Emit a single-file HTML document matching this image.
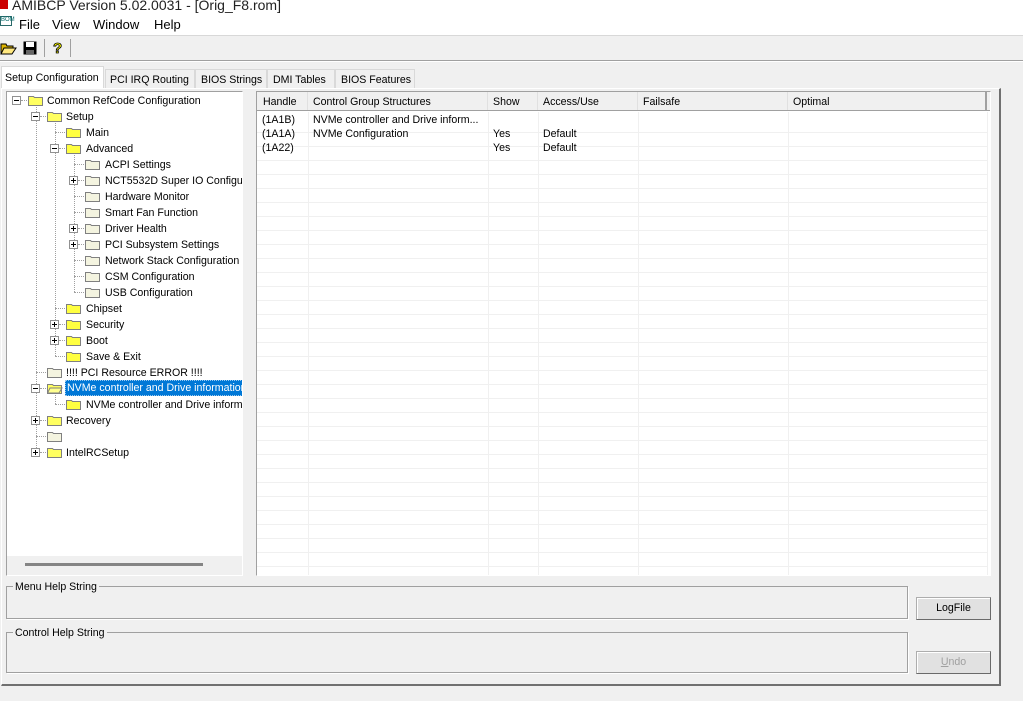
<!DOCTYPE html>
<html><head><meta charset="utf-8"><style>
*{margin:0;padding:0;box-sizing:border-box}
body{width:1023px;height:701px;overflow:hidden;background:#f0f0f0;font-family:"Liberation Sans",Arial,sans-serif;font-size:12px;color:#000;position:relative}
.a{position:absolute;white-space:nowrap}
.t{font-size:10.6px;line-height:16px;margin-top:1px}
.box{position:absolute;width:9px;height:9px;border:1px solid #919191;background:#fff}
.box:before{content:"";position:absolute;left:1px;top:3px;width:5px;height:1px;background:#000}
.box.p:after{content:"";position:absolute;left:3px;top:1px;width:1px;height:5px;background:#000}
.fd{position:absolute;width:16px;height:12px}
.vl{position:absolute;width:0;border-left:1px dotted #a0a0a0}
.hl{position:absolute;height:0;border-top:1px dotted #a0a0a0}
.gr{position:absolute;left:0;width:731px;height:1px;background:#f0f0f0}
.gc{position:absolute;top:0;height:465px;width:1px;background:#f0f0f0}
.th{position:absolute;top:0;height:18px;border-right:1px solid #e0e0e0;padding-left:5px;line-height:20px;font-size:10.6px}
.btn{position:absolute;width:75px;height:23px;background:#e1e1e1;border:1px solid #adadad;border-right-color:#6a6a6a;border-bottom-color:#6a6a6a;box-shadow:inset 1px 1px #fff;text-align:center;line-height:21px;font-size:10.6px}
.grp{position:absolute;left:6px;width:902px;border:1px solid #a0a0a0;box-shadow:1px 1px #fff}
.grp span{position:absolute;top:-7px;left:6px;background:#f0f0f0;padding:0 2px;font-size:10.6px;line-height:14px}
.tab{position:absolute;font-size:10.6px}
</style></head><body>
<div class="a" style="left:0;top:0;width:1023px;height:36px;background:#fff"></div>
<div class="a" style="left:0;top:0;width:8px;height:9px;background:#c00"></div>
<div class="a" style="left:12px;top:-4px;font-size:14px;line-height:18px;color:#222">AMIBCP Version 5.02.0031 - [Orig_F8.rom]</div>
<div class="a" style="left:0;top:16px;width:12px;height:10px;border:1px solid #2a6a6a;font-size:6px;color:#066;line-height:6px">BOM</div>
<div class="a" style="left:19px;top:17px;font-size:13px">File</div>
<div class="a" style="left:52px;top:17px;font-size:13px">View</div>
<div class="a" style="left:93px;top:17px;font-size:13px">Window</div>
<div class="a" style="left:154px;top:17px;font-size:13px">Help</div>
<div class="a" style="left:0;top:35px;width:1023px;height:1px;background:#d8d8d8"></div>
<svg class="a" style="left:0;top:39px" width="75" height="18">
<path d="M1 5h5l1 2h6v3H5L2 15H1z" fill="#ddb400" stroke="#000" stroke-width="1"/><path d="M4 9h12l-4 6H1z" fill="#ffe880" stroke="#000"/>
<rect x="23.5" y="2.5" width="13" height="13" fill="#000"/><rect x="26" y="3" width="8" height="5" fill="#fff"/><rect x="26" y="11" width="8" height="4" fill="#666"/>
<line x1="44.5" y1="0" x2="44.5" y2="18" stroke="#a0a0a0"/>
<text x="53" y="14" font-family="Liberation Sans" font-weight="bold" font-size="15" fill="#ff0" stroke="#000" stroke-width="0.8">?</text>
<line x1="70.5" y1="0" x2="70.5" y2="18" stroke="#a0a0a0"/>
</svg>
<div class="a" style="left:0;top:60px;width:1023px;height:1px;background:#a0a0a0"></div>
<div class="a" style="left:0;top:61px;width:1023px;height:1px;background:#fff"></div>
<!-- tabs -->
<div class="a" style="left:1px;top:66px;width:103px;height:23px;background:#fff;border:1px solid #d9d9d9;border-bottom:none"></div>
<div class="tab a" style="left:5px;top:72px">Setup Configuration</div>
<div class="a" style="left:105px;top:69px;width:90px;height:20px;border:1px solid #d9d9d9;border-bottom:none"></div>
<div class="tab a" style="left:110px;top:74px">PCI IRQ Routing</div>
<div class="a" style="left:195px;top:69px;width:72px;height:20px;border:1px solid #d9d9d9;border-bottom:none"></div>
<div class="tab a" style="left:201px;top:74px">BIOS Strings</div>
<div class="a" style="left:267px;top:69px;width:68px;height:20px;border:1px solid #d9d9d9;border-bottom:none"></div>
<div class="tab a" style="left:273px;top:74px">DMI Tables</div>
<div class="a" style="left:335px;top:69px;width:80px;height:20px;border:1px solid #d9d9d9;border-bottom:none"></div>
<div class="tab a" style="left:341px;top:74px">BIOS Features</div>
<div class="a" style="left:1px;top:88px;width:1000px;height:598px;border:1px solid #fff;border-right:2px solid #707070;border-bottom:2px solid #707070"></div>
<!-- tree -->
<div class="a" style="left:6px;top:91px;width:237px;height:485px;border:1px solid #a0a0a0;border-right-color:#fff;border-bottom-color:#fff;background:#fff;overflow:hidden">
 <div class="a" style="left:0;top:464px;width:240px;height:20px;background:#f0f0f0"></div>
 <div class="a" style="left:18px;top:471px;width:178px;height:3px;background:#858585"></div>
</div>
<div class="a" style="left:7px;top:92px;width:235px;height:462px;overflow:hidden">
<div style="position:absolute;left:-7px;top:-92px;width:260px;height:600px">
<div class="vl" style="left:36px;top:104px;height:348px"></div>
<div class="vl" style="left:55px;top:120px;height:236px"></div>
<div class="vl" style="left:74px;top:152px;height:140px"></div>
<div class="vl" style="left:55px;top:392px;height:12px"></div>
<div class="box" style="left:12px;top:96px"></div><div class="hl" style="left:21px;top:100px;width:8px"></div><svg class="fd" style="left:28px;top:94px"><path d="M.5 2.5h5l1 1h8v8H.5z" fill="#ffff60" stroke="#808080"/></svg><div class="a t" style="left:47px;top:92px">Common RefCode Configuration</div>
<div class="box" style="left:31px;top:112px"></div><div class="hl" style="left:40px;top:116px;width:8px"></div><svg class="fd" style="left:47px;top:110px"><path d="M.5 2.5h5l1 1h8v8H.5z" fill="#ffff60" stroke="#808080"/></svg><div class="a t" style="left:66px;top:108px">Setup</div>
<div class="hl" style="left:55px;top:132px;width:12px"></div><svg class="fd" style="left:66px;top:126px"><path d="M.5 2.5h5l1 1h8v8H.5z" fill="#ffff40" stroke="#808080"/></svg><div class="a t" style="left:86px;top:124px">Main</div>
<div class="box" style="left:50px;top:144px"></div><div class="hl" style="left:59px;top:148px;width:8px"></div><svg class="fd" style="left:66px;top:142px"><path d="M.5 2.5h5l1 1h8v8H.5z" fill="#ffff40" stroke="#808080"/></svg><div class="a t" style="left:86px;top:140px">Advanced</div>
<div class="hl" style="left:74px;top:164px;width:12px"></div><svg class="fd" style="left:85px;top:158px"><path d="M.5 2.5h5l1 1h8v8H.5z" fill="#f4f4e0" stroke="#808080"/></svg><div class="a t" style="left:105px;top:156px">ACPI Settings</div>
<div class="box p" style="left:69px;top:176px"></div><div class="hl" style="left:78px;top:180px;width:8px"></div><svg class="fd" style="left:85px;top:174px"><path d="M.5 2.5h5l1 1h8v8H.5z" fill="#f4f4e0" stroke="#808080"/></svg><div class="a t" style="left:105px;top:172px">NCT5532D Super IO Configuration</div>
<div class="hl" style="left:74px;top:196px;width:12px"></div><svg class="fd" style="left:85px;top:190px"><path d="M.5 2.5h5l1 1h8v8H.5z" fill="#f4f4e0" stroke="#808080"/></svg><div class="a t" style="left:105px;top:188px">Hardware Monitor</div>
<div class="hl" style="left:74px;top:212px;width:12px"></div><svg class="fd" style="left:85px;top:206px"><path d="M.5 2.5h5l1 1h8v8H.5z" fill="#f4f4e0" stroke="#808080"/></svg><div class="a t" style="left:105px;top:204px">Smart Fan Function</div>
<div class="box p" style="left:69px;top:224px"></div><div class="hl" style="left:78px;top:228px;width:8px"></div><svg class="fd" style="left:85px;top:222px"><path d="M.5 2.5h5l1 1h8v8H.5z" fill="#f4f4e0" stroke="#808080"/></svg><div class="a t" style="left:105px;top:220px">Driver Health</div>
<div class="box p" style="left:69px;top:240px"></div><div class="hl" style="left:78px;top:244px;width:8px"></div><svg class="fd" style="left:85px;top:238px"><path d="M.5 2.5h5l1 1h8v8H.5z" fill="#f4f4e0" stroke="#808080"/></svg><div class="a t" style="left:105px;top:236px">PCI Subsystem Settings</div>
<div class="hl" style="left:74px;top:260px;width:12px"></div><svg class="fd" style="left:85px;top:254px"><path d="M.5 2.5h5l1 1h8v8H.5z" fill="#f4f4e0" stroke="#808080"/></svg><div class="a t" style="left:105px;top:252px">Network Stack Configuration</div>
<div class="hl" style="left:74px;top:276px;width:12px"></div><svg class="fd" style="left:85px;top:270px"><path d="M.5 2.5h5l1 1h8v8H.5z" fill="#f4f4e0" stroke="#808080"/></svg><div class="a t" style="left:105px;top:268px">CSM Configuration</div>
<div class="hl" style="left:74px;top:292px;width:12px"></div><svg class="fd" style="left:85px;top:286px"><path d="M.5 2.5h5l1 1h8v8H.5z" fill="#f4f4e0" stroke="#808080"/></svg><div class="a t" style="left:105px;top:284px">USB Configuration</div>
<div class="hl" style="left:55px;top:308px;width:12px"></div><svg class="fd" style="left:66px;top:302px"><path d="M.5 2.5h5l1 1h8v8H.5z" fill="#ffff40" stroke="#808080"/></svg><div class="a t" style="left:86px;top:300px">Chipset</div>
<div class="box p" style="left:50px;top:320px"></div><div class="hl" style="left:59px;top:324px;width:8px"></div><svg class="fd" style="left:66px;top:318px"><path d="M.5 2.5h5l1 1h8v8H.5z" fill="#ffff40" stroke="#808080"/></svg><div class="a t" style="left:86px;top:316px">Security</div>
<div class="box p" style="left:50px;top:336px"></div><div class="hl" style="left:59px;top:340px;width:8px"></div><svg class="fd" style="left:66px;top:334px"><path d="M.5 2.5h5l1 1h8v8H.5z" fill="#ffff40" stroke="#808080"/></svg><div class="a t" style="left:86px;top:332px">Boot</div>
<div class="hl" style="left:55px;top:356px;width:12px"></div><svg class="fd" style="left:66px;top:350px"><path d="M.5 2.5h5l1 1h8v8H.5z" fill="#ffff40" stroke="#808080"/></svg><div class="a t" style="left:86px;top:348px">Save &amp; Exit</div>
<div class="hl" style="left:36px;top:372px;width:12px"></div><svg class="fd" style="left:47px;top:366px"><path d="M.5 2.5h5l1 1h8v8H.5z" fill="#f4f4e0" stroke="#808080"/></svg><div class="a t" style="left:66px;top:364px">!!!! PCI Resource ERROR !!!!</div>
<div class="box" style="left:31px;top:384px"></div><div class="hl" style="left:40px;top:388px;width:8px"></div><svg class="fd" style="left:47px;top:382px"><path d="M.5 2.5h5l1 1h8v8H.5z" fill="#ffff60" stroke="#808080"/><path d="M3 6h12l-3 5H.5z" fill="#ffff90" stroke="#808080"/></svg><div class="a t" style="left:65px;top:379px;width:190px;height:16px;background:#0078d7;color:#fff;padding-left:1px;border:1px dotted #99c9ef;line-height:14px">NVMe controller and Drive information</div>
<div class="hl" style="left:55px;top:404px;width:12px"></div><svg class="fd" style="left:66px;top:398px"><path d="M.5 2.5h5l1 1h8v8H.5z" fill="#ffff40" stroke="#808080"/></svg><div class="a t" style="left:86px;top:396px">NVMe controller and Drive information</div>
<div class="box p" style="left:31px;top:416px"></div><div class="hl" style="left:40px;top:420px;width:8px"></div><svg class="fd" style="left:47px;top:414px"><path d="M.5 2.5h5l1 1h8v8H.5z" fill="#ffff60" stroke="#808080"/></svg><div class="a t" style="left:66px;top:412px">Recovery</div>
<div class="hl" style="left:36px;top:436px;width:12px"></div><svg class="fd" style="left:47px;top:430px"><path d="M.5 2.5h5l1 1h8v8H.5z" fill="#f4f4e0" stroke="#808080"/></svg>
<div class="box p" style="left:31px;top:448px"></div><div class="hl" style="left:40px;top:452px;width:8px"></div><svg class="fd" style="left:47px;top:446px"><path d="M.5 2.5h5l1 1h8v8H.5z" fill="#ffff60" stroke="#808080"/></svg><div class="a t" style="left:66px;top:444px">IntelRCSetup</div>
</div></div>
<!-- table -->
<div class="a" style="left:256px;top:91px;width:735px;height:485px;border:1px solid #a0a0a0;border-right-color:#fff;border-bottom-color:#fff;background:#fff;overflow:hidden">
 <div class="a" style="left:0;top:0;width:733px;height:19px;background:#f0f0f0;border-bottom:1px solid #a0a0a0"></div>
 <div class="th" style="left:1px;width:50px">Handle</div>
 <div class="th" style="left:51px;width:180px">Control Group Structures</div>
 <div class="th" style="left:231px;width:50px">Show</div>
 <div class="th" style="left:281px;width:100px">Access/Use</div>
 <div class="th" style="left:381px;width:150px">Failsafe</div>
 <div class="th" style="left:531px;width:199px;border-right:2px solid #a0a0a0">Optimal</div>
 <div class="a" style="left:0;top:20px;width:733px;height:465px">
  <div class="gc" style="left:51px"></div><div class="gc" style="left:231px"></div><div class="gc" style="left:281px"></div><div class="gc" style="left:381px"></div><div class="gc" style="left:531px"></div><div class="gc" style="left:730px"></div>
  <div class="gr" style="top:20px"></div><div class="gr" style="top:34px"></div><div class="gr" style="top:48px"></div><div class="gr" style="top:62px"></div><div class="gr" style="top:76px"></div><div class="gr" style="top:90px"></div><div class="gr" style="top:104px"></div><div class="gr" style="top:118px"></div><div class="gr" style="top:132px"></div><div class="gr" style="top:146px"></div><div class="gr" style="top:160px"></div><div class="gr" style="top:174px"></div><div class="gr" style="top:188px"></div><div class="gr" style="top:202px"></div><div class="gr" style="top:216px"></div><div class="gr" style="top:230px"></div><div class="gr" style="top:244px"></div><div class="gr" style="top:258px"></div><div class="gr" style="top:272px"></div><div class="gr" style="top:286px"></div><div class="gr" style="top:300px"></div><div class="gr" style="top:314px"></div><div class="gr" style="top:328px"></div><div class="gr" style="top:342px"></div><div class="gr" style="top:356px"></div><div class="gr" style="top:370px"></div><div class="gr" style="top:384px"></div><div class="gr" style="top:398px"></div><div class="gr" style="top:412px"></div><div class="gr" style="top:426px"></div><div class="gr" style="top:440px"></div><div class="gr" style="top:454px"></div><div class="gr" style="top:463px;height:2px;background:#e8e8e8"></div>
  <div class="a" style="left:5px;top:1px;font-size:10.6px;line-height:14px">(1A1B)<br>(1A1A)<br>(1A22)</div>
  <div class="a" style="left:56px;top:1px;font-size:10.6px;line-height:14px">NVMe controller and Drive inform...<br>NVMe Configuration</div>
  <div class="a" style="left:236px;top:15px;font-size:10.6px;line-height:14px">Yes<br>Yes</div>
  <div class="a" style="left:286px;top:15px;font-size:10.6px;line-height:14px">Default<br>Default</div>
 </div>
</div>
<div class="grp" style="top:586px;height:33px"><span>Menu Help String</span></div>
<div class="grp" style="top:632px;height:41px"><span>Control Help String</span></div>
<div class="btn" style="left:916px;top:597px">LogFile</div>
<div class="btn" style="left:916px;top:651px;color:#a0a0a0"><u>U</u>ndo</div>
</body></html>
